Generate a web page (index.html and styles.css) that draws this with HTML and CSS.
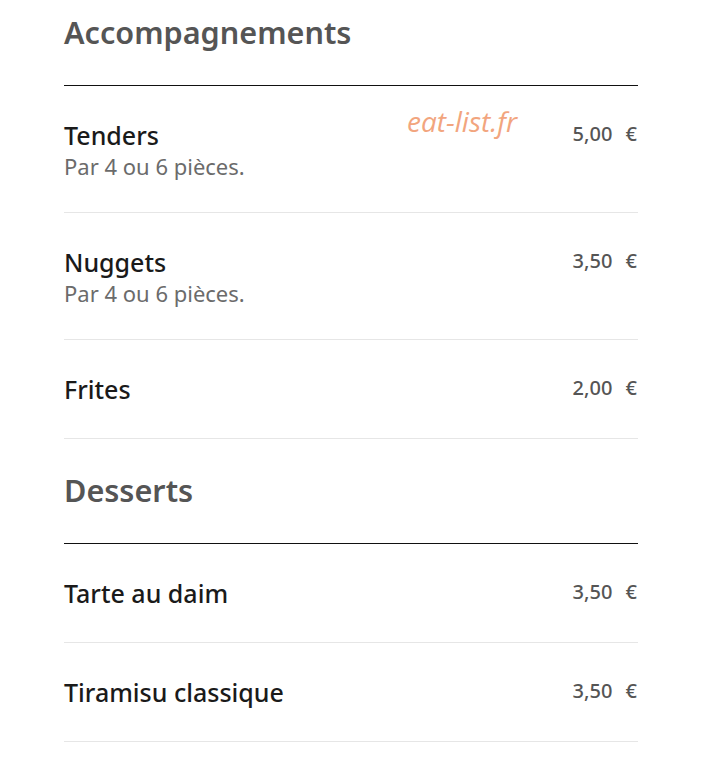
FILE: index.html
```html
<!DOCTYPE html>
<html lang="fr">
<head>
<meta charset="utf-8">
<title>Menu</title>
<link rel="stylesheet" href="styles.css">
</head>
<body>
<div class="page">
  <section class="section">
    <h2 class="section-title">Accompagnements</h2>
    <ul class="items">
      <li class="item">
        <div class="item-text">
          <div class="item-name">Tenders</div>
          <div class="item-desc">Par 4 ou 6 pièces.</div>
        </div>
        <div class="item-price">5,00 €</div>
      </li>
      <li class="item">
        <div class="item-text">
          <div class="item-name">Nuggets</div>
          <div class="item-desc">Par 4 ou 6 pièces.</div>
        </div>
        <div class="item-price">3,50 €</div>
      </li>
      <li class="item">
        <div class="item-text">
          <div class="item-name">Frites</div>
        </div>
        <div class="item-price">2,00 €</div>
      </li>
    </ul>
  </section>
  <section class="section">
    <h2 class="section-title">Desserts</h2>
    <ul class="items">
      <li class="item">
        <div class="item-text">
          <div class="item-name">Tarte au daim</div>
        </div>
        <div class="item-price">3,50 €</div>
      </li>
      <li class="item">
        <div class="item-text">
          <div class="item-name">Tiramisu classique</div>
        </div>
        <div class="item-price">3,50 €</div>
      </li>
    </ul>
  </section>
  <div class="watermark">eat-list.fr</div>
</div>
</body>
</html>
```

FILE: styles.css
```css
html, body {
  margin: 0;
  padding: 0;
  background: #ffffff;
}

body {
  font-family: "Noto Sans", "Open Sans", "Liberation Sans", sans-serif;
  color: #1a1a1a;
}

.page {
  position: relative;
  width: 574px;
  padding: 12px 0 0 64px;
}

.section + .section {
  margin-top: 31px;
}

.section-title {
  margin: 0;
  padding-bottom: 33px;
  border-bottom: 1px solid #111111;
  font-size: 30.6px;
  line-height: 40px;
  font-weight: 600;
  color: #555555;
}

.items {
  list-style: none;
  margin: 0;
  padding: 0;
}

.item {
  display: flex;
  justify-content: space-between;
  align-items: flex-start;
  padding: 32px 0 32px;
  border-bottom: 1px solid #e6e6e6;
}

.item-name {
  font-size: 25px;
  line-height: 34px;
  font-weight: 500;
  color: #1a1a1a;
}

.item-desc {
  font-size: 22px;
  line-height: 28px;
  font-weight: 400;
  color: #6b6b6b;
}

.item-price {
  font-size: 20px;
  line-height: 32px;
  font-weight: 500;
  word-spacing: 8px;
  color: #555555;
  padding-right: 1px;
}

.watermark {
  position: absolute;
  left: 407px;
  top: 102px;
  font-size: 28px;
  line-height: normal;
  font-family: "Open Sans", "Noto Sans", sans-serif;
  font-style: italic;
  color: #f2a57e;
}
```
